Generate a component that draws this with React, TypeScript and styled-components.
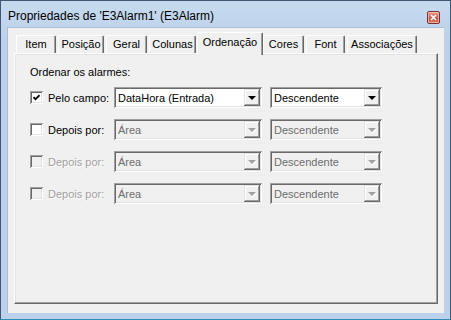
import React from "react";
import styled, { createGlobalStyle, css } from "styled-components";

const GlobalStyle = createGlobalStyle`
  html, body {
    margin: 0;
    padding: 0;
    width: 451px;
    height: 320px;
    overflow: hidden;
    background: #bcd2ea;
  }
  * { box-sizing: border-box; }
`;

const Window = styled.div`
  width: 451px;
  height: 320px;
  display: flex;
  flex-direction: column;
  border: 1px solid #3f5873;
  border-bottom-color: #2d8fb6;
  background: linear-gradient(#c6daef, #bcd2ea 40px);
  padding: 0 6px 6px 6px;
  font-family: "Liberation Sans", Arial, sans-serif;
`;

const TitleBar = styled.div`
  height: 26px;
  padding: 4px 4px 0 1px;
  display: flex;
  align-items: center;
  justify-content: space-between;
`;

const Title = styled.span`
  font-size: 12px;
  color: #000;
`;

const CloseButton = styled.div`
  width: 13px;
  height: 13px;
  margin-top: 2px;
  border: 1px solid #7b3128;
  border-radius: 2px;
  background: linear-gradient(#e59a8f, #c9574a 60%, #d8786a);
  box-shadow: inset 0 0 0 1px rgba(255, 220, 210, 0.6);
  display: flex;
  align-items: center;
  justify-content: center;
`;

const Client = styled.div`
  flex: 1;
  background: #f0f0f0;
  border: 1px solid #a9bdd3;
  border-width: 1px 0 0 1px;
  padding: 4px 6px 9px 6px;
  display: flex;
  flex-direction: column;
`;

const TabStrip = styled.div`
  height: 21px;
  display: flex;
  align-items: flex-end;
  padding-left: 2px;
  position: relative;
  z-index: 1;
`;

const Tab = styled.div<{ $w: number; $active?: boolean }>`
  width: ${(p) => p.$w}px;
  height: 18px;
  margin-right: 2px;
  margin-bottom: 0;
  background: #f0f0f0;
  border-left: 1px solid #fff;
  border-top: 1px solid #fff;
  border-right: 1px solid #696969;
  border-top-left-radius: 2px;
  border-top-right-radius: 2px;
  box-shadow: inset -1px 0 0 #a0a0a0;
  font-size: 11px;
  color: #000;
  display: flex;
  align-items: center;
  justify-content: center;
  padding-bottom: 1px;
  ${(p) =>
    p.$active &&
    css`
      height: 23px;
      margin-left: -1px;
      margin-right: 0;
      margin-bottom: -2px;
      padding-bottom: 4px;
    `}
`;

const Panel = styled.div`
  flex: 1;
  border-left: 1px solid #fff;
  border-top: 1px solid #fff;
  border-right: 1px solid #696969;
  border-bottom: 1px solid #696969;
  box-shadow: inset -1px -1px 0 #a0a0a0, inset 1px 1px 0 #e3e3e3;
  padding: 12px 15px 0 15px;
  display: flex;
  flex-direction: column;
  font-size: 11px;
`;

const Heading = styled.div`
  line-height: 13px;
  color: #000;
  margin-bottom: 8px;
`;

const Rows = styled.div`
  display: flex;
  flex-direction: column;
  gap: 11px;
`;

const Row = styled.div`
  height: 21px;
  display: flex;
  align-items: center;
`;

const CheckGroup = styled.div`
  width: 84px;
  display: flex;
  align-items: center;
  gap: 5px;
`;

const CheckBox = styled.div<{ $disabled?: boolean }>`
  width: 13px;
  height: 13px;
  background: ${(p) => (p.$disabled ? "#f0f0f0" : "#fff")};
  box-shadow: inset 1px 1px 0 #a0a0a0, inset -1px -1px 0 #fff,
    inset 2px 2px 0 #696969, inset -2px -2px 0 #e3e3e3;
  display: flex;
  align-items: center;
  justify-content: center;
`;

const Label = styled.span<{ $disabled?: boolean }>`
  color: ${(p) => (p.$disabled ? "#a0a0a0" : "#000")};
  text-shadow: ${(p) => (p.$disabled ? "1px 1px 0 #fff" : "none")};
  white-space: nowrap;
`;

const Combo = styled.div<{ $w: number; $disabled?: boolean }>`
  width: ${(p) => p.$w}px;
  height: 21px;
  margin-right: 8px;
  padding: 2px;
  display: flex;
  align-items: stretch;
  background: ${(p) => (p.$disabled ? "#f0f0f0" : "#fff")};
  box-shadow: inset 1px 1px 0 #a0a0a0, inset -1px -1px 0 #fff,
    inset 2px 2px 0 #696969, inset -2px -2px 0 #e3e3e3;
`;

const ComboText = styled.div<{ $disabled?: boolean }>`
  flex: 1;
  padding-left: 2px;
  display: flex;
  align-items: center;
  color: ${(p) => (p.$disabled ? "#6d6d6d" : "#000")};
  white-space: nowrap;
  overflow: hidden;
`;

const DropButton = styled.div`
  width: 16px;
  background: #f0f0f0;
  box-shadow: inset -1px -1px 0 #696969, inset 1px 1px 0 #e3e3e3,
    inset -2px -2px 0 #a0a0a0, inset 2px 2px 0 #fff;
  display: flex;
  align-items: center;
  justify-content: center;
`;

const Arrow = styled.div<{ $disabled?: boolean }>`
  width: 0;
  height: 0;
  border-left: 4px solid transparent;
  border-right: 4px solid transparent;
  border-top: 4px solid ${(p) => (p.$disabled ? "#a0a0a0" : "#000")};
  margin-left: -1px;
  filter: ${(p) => (p.$disabled ? "drop-shadow(1px 1px 0 #fff)" : "none")};
`;

const CheckMark = () => (
  <svg width="7" height="7" viewBox="0 0 7 7">
    <path d="M0.5 3.2 L2.5 5.2 L6.5 1.2" fill="none" stroke="#000" strokeWidth="1.7" />
  </svg>
);

const CloseGlyph = () => (
  <svg width="7" height="7" viewBox="0 0 7 7">
    <path d="M1 1 L6 6 M6 1 L1 6" stroke="#fff" strokeWidth="1.6" />
  </svg>
);

type SortRow = {
  checked: boolean;
  labelDisabled: boolean;
  combosDisabled: boolean;
  label: string;
  field: string;
  order: string;
};

const rows: SortRow[] = [
  { checked: true, labelDisabled: false, combosDisabled: false, label: "Pelo campo:", field: "DataHora (Entrada)", order: "Descendente" },
  { checked: false, labelDisabled: false, combosDisabled: true, label: "Depois por:", field: "Área", order: "Descendente" },
  { checked: false, labelDisabled: true, combosDisabled: true, label: "Depois por:", field: "Área", order: "Descendente" },
  { checked: false, labelDisabled: true, combosDisabled: true, label: "Depois por:", field: "Área", order: "Descendente" },
];

const tabs = [
  { name: "Item", w: 40 },
  { name: "Posição", w: 46 },
  { name: "Geral", w: 41 },
  { name: "Colunas", w: 47 },
  { name: "Ordenação", w: 66, active: true },
  { name: "Cores", w: 41 },
  { name: "Font", w: 39 },
  { name: "Associações", w: 70 },
];

const ComboBox = ({ w, value, disabled }: { w: number; value: string; disabled: boolean }) => (
  <Combo $w={w} $disabled={disabled}>
    <ComboText $disabled={disabled}>{value}</ComboText>
    <DropButton>
      <Arrow $disabled={disabled} />
    </DropButton>
  </Combo>
);

export default function App() {
  return (
    <>
      <GlobalStyle />
      <Window>
        <TitleBar>
          <Title>Propriedades de 'E3Alarm1' (E3Alarm)</Title>
          <CloseButton>
            <CloseGlyph />
          </CloseButton>
        </TitleBar>
        <Client>
          <TabStrip>
            {tabs.map((t) => (
              <Tab key={t.name} $w={t.w} $active={t.active}>
                {t.name}
              </Tab>
            ))}
          </TabStrip>
          <Panel>
            <Heading>Ordenar os alarmes:</Heading>
            <Rows>
              {rows.map((r, i) => (
                <Row key={i}>
                  <CheckGroup>
                    <CheckBox $disabled={r.labelDisabled}>{r.checked && <CheckMark />}</CheckBox>
                    <Label $disabled={r.labelDisabled}>{r.label}</Label>
                  </CheckGroup>
                  <ComboBox w={148} value={r.field} disabled={r.combosDisabled} />
                  <ComboBox w={112} value={r.order} disabled={r.combosDisabled} />
                </Row>
              ))}
            </Rows>
          </Panel>
        </Client>
      </Window>
    </>
  );
}
